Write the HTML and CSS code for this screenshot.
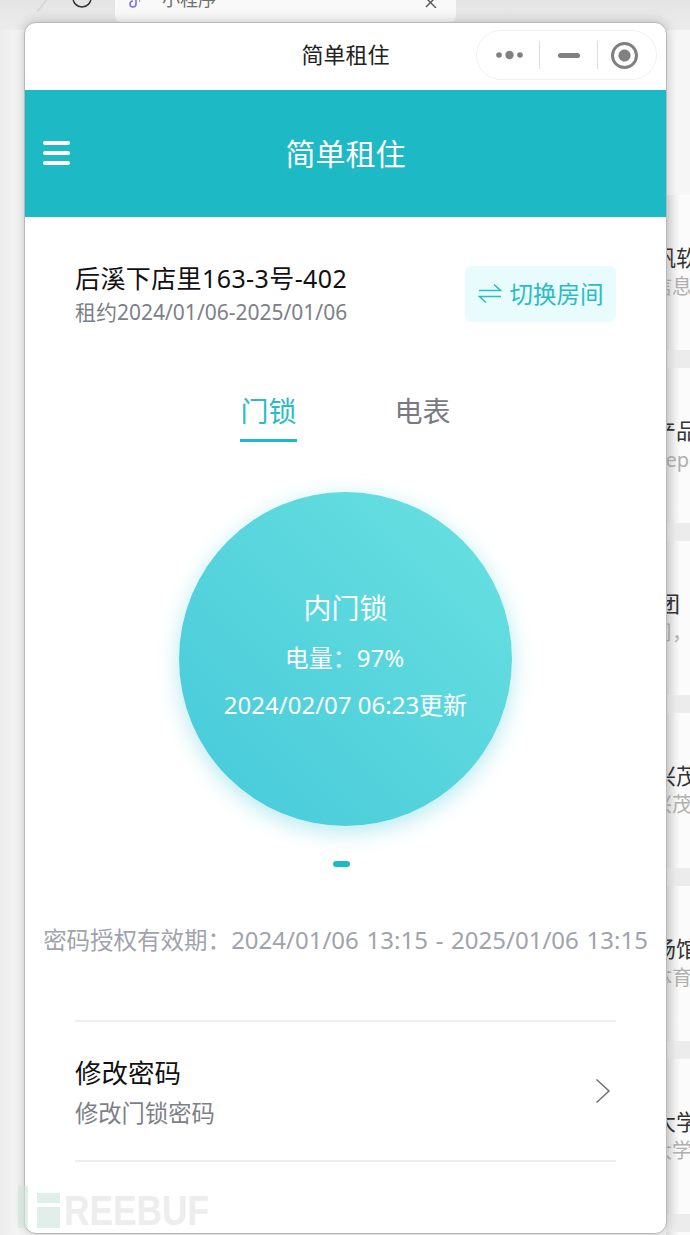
FILE: index.html
```html
<!DOCTYPE html>
<html lang="zh-CN">
<head>
    <meta charset="UTF-8">
    <title>简单租住</title>
    <link rel="stylesheet" href="styles.css">
</head>
<body>
    <div class="desktop">
        <div class="browser-bar">
            <svg class="bar-icons" width="100" height="12" viewBox="0 0 100 12">
                <path d="M48 -2 L37 12" stroke="#d4d4d4" stroke-width="1.5" fill="none"/>
                <circle cx="82" cy="-2" r="9" stroke="#333" stroke-width="1.5" fill="none"/>
            </svg>
            <div class="browser-tab">
                <svg width="14" height="10" viewBox="0 0 14 10"><path d="M8 0v4a3 3 0 1 1-3-3M11 1h1" stroke="#7a6ff0" stroke-width="1.6" fill="none"/></svg>
                <span class="tab-name">小程序</span>
                <svg class="tab-close" width="14" height="8" viewBox="0 0 14 8"><path d="M1-3l11 11M12-3L2 7" stroke="#555" stroke-width="1.4" fill="none"/></svg>
            </div>
        </div>

        <!-- 后面窗口露出来的列表 -->
        <div class="behind-list">
            <div class="behind-item"><p class="behind-title">帆软</p><p class="behind-sub">信息技</p></div>
            <div class="behind-item"><p class="behind-title">产品</p><p class="behind-sub sub-latin">Repo</p></div>
            <div class="behind-item"><p class="behind-title title-short">团</p><p class="behind-sub sub-short">司，公</p></div>
            <div class="behind-item"><p class="behind-title">兴茂</p><p class="behind-sub">兴茂公</p></div>
            <div class="behind-item"><p class="behind-title">场馆</p><p class="behind-sub">体育馆</p></div>
            <div class="behind-item"><p class="behind-title">大学</p><p class="behind-sub">大学是</p></div>
        </div>

        <div class="window">
            <div class="title-bar">
                <span class="title-text">简单租住</span>
                <div class="capsule">
                    <svg width="32" height="12" viewBox="0 0 32 12"><circle cx="4" cy="6" r="2.8" fill="#808080"/><circle cx="14.500" cy="6" r="4.200" fill="#808080"/><circle cx="25" cy="6" r="2.800" fill="#808080"/></svg>
                    <span class="capsule-line"></span>
                    <span class="capsule-min"></span>
                    <span class="capsule-line"></span>
                    <span class="capsule-dot"></span>
                </div>
            </div>

            <div class="nav-bar">
                <div class="menu-icon"><span></span><span></span><span></span></div>
                <span class="nav-title">简单租住</span>
            </div>

            <div class="content">
                <div class="room-row">
                    <div class="room-info">
                        <div class="room-name">后溪下店里163-3号-402</div>
                        <div class="room-date">租约2024/01/06-2025/01/06</div>
                    </div>
                    <div class="switch-btn">
                        <svg width="24" height="24" viewBox="0 0 24 24"><path d="M1 9.500h21.500L16 3.500M23 15.500H1.500L8 21.500" stroke="#2bbbc6" stroke-width="1.6" fill="none"/></svg>
                        <span>切换房间</span>
                    </div>
                </div>

                <div class="tabs">
                    <div class="tab active">门锁</div>
                    <div class="tab">电表</div>
                </div>

                <div class="lock-circle">
                    <div class="lock-name">内门锁</div>
                    <div class="lock-power">电量：97%</div>
                    <div class="lock-time">2024/02/07 06:23更新</div>
                </div>
                <div class="pager"></div>

                <div class="valid-time"><span class="valid-label">密码授权有效期：</span>2024/01/06 13:15 - 2025/01/06 13:15</div>

                <div class="menu-item">
                    <div class="item-text">
                        <div class="item-title">修改密码</div>
                        <div class="item-sub">修改门锁密码</div>
                    </div>
                    <svg width="16" height="26" viewBox="0 0 16 26"><path d="M1.500 1.500L14 13 1.500 24.500" stroke="#6c7079" stroke-width="1.500" fill="none"/></svg>
                </div>
            </div>
        </div>

        <!-- 水印 -->
        <div class="watermark">
            <span class="mark-bar"></span>
            <span class="mark-logo"><i></i><i></i></span>
            <span class="mark-text">REEBUF</span>
        </div>
    </div>
</body>
</html>
```

FILE: styles.css
```css
* {
    box-sizing: border-box;
}
html, body {
    margin: 0;
    padding: 0;
}
body {
    font-family: "Noto Sans", "Noto Sans CJK SC", sans-serif;
    background-color: #f4f4f4;
}
.desktop {
    position: relative;
    width: 690px;
    height: 1235px;
    overflow: hidden;
    background: linear-gradient(to right, #ececec 0, #f6f6f6 20px);
}
.browser-bar {
    position: absolute;
    top: 0;
    left: 0;
    width: 100%;
    height: 30px;
    background: linear-gradient(to bottom, #e4e4e4, #ececec);
}
.bar-icons {
    position: absolute;
    top: 0;
    left: 0;
}
.browser-tab {
    position: absolute;
    left: 115px;
    top: 0;
    width: 341px;
    height: 22px;
    background-color: #f9f9f9;
    border-radius: 0 0 6px 6px;
    padding-left: 13px;
    display: flex;
    gap: 20px;
    overflow: hidden;
}
.tab-name {
    margin-top: -13px;
    font-size: 18px;
    line-height: 24px;
    color: #6f6f6f;
}
.tab-close {
    position: absolute;
    left: 309px;
    top: 0;
}
.behind-list {
    position: absolute;
    left: 666px;
    top: 195px;
    width: 24px;
    height: 1040px;
    overflow: hidden;
    background: linear-gradient(to right, #e2e2e2, #fbfbfb 14px);
}
.behind-item {
    height: 172.8px;
    padding-top: 47px;
    border-bottom: 18px solid #ececec;
    white-space: nowrap;
}
.behind-item p {
    margin: 0;
}
.behind-title {
    margin-left: -12px !important;
    font-size: 22px;
    line-height: 30px;
    color: #333;
}
.behind-sub {
    margin-left: -14px !important;
    font-size: 20px;
    line-height: 30px;
    color: #b0b0b0;
}
.sub-latin {
    margin-left: -13px !important;
}
.title-short {
    margin-left: -8px !important;
}
.sub-short {
    margin-left: -14px !important;
}
.window {
    position: absolute;
    left: 24px;
    top: 22px;
    width: 643px;
    height: 1212px;
    background-color: white;
    border: 1px solid #b8b8b8;
    border-radius: 12px;
    box-shadow: 0 0 12px rgba(0,0,0,0.22);
    overflow: hidden;
}
.title-bar {
    height: 67px;
    display: flex;
    justify-content: center;
    align-items: center;
    padding-bottom: 7px;
    position: relative;
}
.title-text {
    font-size: 22px;
    color: #222;
}
.capsule {
    position: absolute;
    left: 451px;
    top: 7px;
    width: 181px;
    height: 50px;
    border: 1px solid #f0f0f0;
    border-radius: 25px;
    display: flex;
    align-items: center;
    padding-left: 18px;
}
.capsule-line {
    width: 1px;
    height: 28px;
    background-color: #dcdcdc;
    margin-left: 12px;
}
.capsule-min {
    width: 22px;
    height: 5px;
    border-radius: 3px;
    background-color: #808080;
    margin-left: 18px;
    margin-right: 5px;
}
.capsule-dot {
    width: 27px;
    height: 27px;
    border: 3px solid #808080;
    border-radius: 50%;
    margin-left: 13px;
    background: radial-gradient(circle, #808080 0 5.5px, white 6.5px);
}
.nav-bar {
    height: 127px;
    background-color: #1db9c5;
    display: flex;
    justify-content: center;
    align-items: center;
    padding-bottom: 4px;
    position: relative;
}
.nav-title {
    font-size: 30px;
    color: white;
}
.menu-icon {
    position: absolute;
    left: 18px;
    top: 51px;
    display: flex;
    flex-direction: column;
    gap: 6.5px;
}
.menu-icon span {
    display: block;
    width: 27px;
    height: 3.5px;
    border-radius: 2px;
    background-color: white;
}
.content {
    padding: 0 50px;
}
.room-row {
    display: flex;
    justify-content: space-between;
    align-items: flex-start;
    padding-top: 44px;
}
.room-name {
    font-size: 25px;
    line-height: 34px;
    letter-spacing: 0.4px;
    color: #111;
}
.room-date {
    font-size: 21px;
    line-height: 34px;
    color: #7d7f88;
}
.switch-btn {
    margin-top: 5px;
    width: 151px;
    height: 56px;
    padding-bottom: 3px;
    border-radius: 6px;
    background-color: #e8fcfe;
    color: #2bbbc6;
    font-size: 23.5px;
    display: flex;
    align-items: center;
    justify-content: center;
    gap: 8px;
}
.tabs {
    display: flex;
    justify-content: center;
    gap: 98px;
    margin-top: 58px;
}
.tab {
    font-size: 28px;
    line-height: 40px;
    height: 55px;
    padding-top: 4px;
    color: #777a83;
}
.tab.active {
    color: #2bbbc6;
    border-bottom: 3px solid #1db9c6;
}
.lock-circle {
    width: 333px;
    height: 334px;
    margin: 50px auto 0;
    border-radius: 50%;
    background: linear-gradient(45deg, #46c9da, #69e1e0);
    box-shadow: 0 6px 22px rgba(70,201,218,0.4);
    color: white;
    text-align: center;
    padding-top: 95px;
}
.lock-name {
    font-size: 28px;
    line-height: 42px;
}
.lock-power {
    font-size: 24px;
    line-height: 36px;
    margin-top: 11px;
    padding-right: 2px;
}
.lock-time {
    font-size: 24px;
    line-height: 36px;
    margin-top: 11px;
    white-space: nowrap;
}
.pager {
    width: 17px;
    height: 6px;
    border-radius: 3px;
    background-color: #1db9c6;
    margin: 35px 0 0 258px;
}
.valid-time {
    margin: 55px -32px 0;
    font-size: 24px;
    line-height: 36px;
    word-spacing: 1.5px;
    color: #a0a3ad;
    white-space: nowrap;
    text-align: center;
}
.valid-label {
    font-size: 23.5px;
}
.menu-item {
    margin-top: 62px;
    height: 142px;
    border-top: 2px solid #eeeeee;
    border-bottom: 2px solid #eeeeee;
    display: flex;
    justify-content: space-between;
    align-items: center;
    padding-right: 5px;
}
.item-text {
    padding-top: 4px;
}
.item-title {
    font-size: 26.5px;
    line-height: 40px;
    color: #111;
}
.item-sub {
    font-size: 23.3px;
    line-height: 40px;
    color: #7d7f88;
}
.watermark {
    position: absolute;
    left: 18px;
    top: 1186px;
    height: 42px;
    display: flex;
    align-items: flex-end;
}
.mark-bar {
    width: 10px;
    height: 42px;
    background-color: rgba(205,228,218,0.6);
}
.mark-logo {
    width: 23px;
    height: 35px;
    margin-left: 9px;
    display: flex;
    flex-direction: column;
    gap: 4px;
}
.mark-logo i {
    display: block;
    height: 10px;
    background-color: #e0efe9;
}
.mark-logo i + i {
    height: 21px;
}
.mark-text {
    margin-left: 4px;
    font-family: "Liberation Sans", sans-serif;
    font-weight: bold;
    font-size: 43px;
    line-height: 36px;
    color: #ededed;
    transform: scaleX(0.82);
    transform-origin: left;
}
```
